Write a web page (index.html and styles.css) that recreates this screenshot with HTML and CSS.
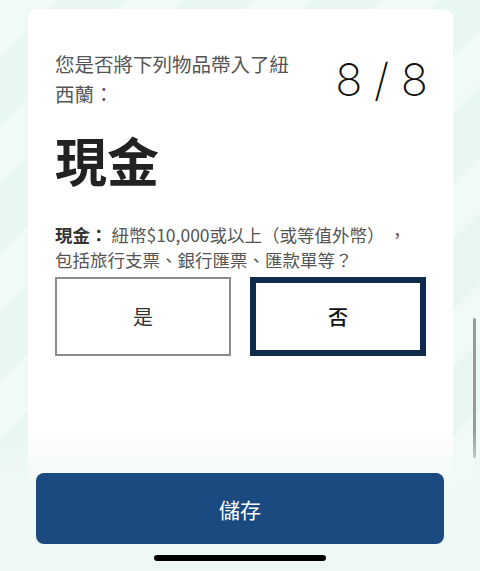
FILE: index.html
```html
<!DOCTYPE html>
<html lang="zh-Hant">
<head>
    <meta charset="UTF-8">
    <meta name="viewport" content="width=device-width, initial-scale=1.0">
    <title>現金</title>
    <link rel="stylesheet" href="styles.css">
</head>
<body>
    <div class="screen">
        <div class="card">
            <div class="card-head">
                <p class="question">您是否將下列物品帶入了紐西蘭：</p>
                <div class="counter">8 / 8</div>
            </div>

            <h1 class="item-title">現金</h1>

            <p class="item-desc"><strong>現金：</strong> 紐幣$10,000或以上（或等值外幣） ，<br>包括旅行支票、銀行匯票、匯款單等？</p>

            <div class="choices">
                <button class="choice">是</button>
                <button class="choice selected">否</button>
            </div>
        </div>

        <div class="scrollbar"></div>

        <div class="footer">
            <button class="save-button">儲存</button>
            <div class="home-bar"></div>
        </div>
    </div>
</body>
</html>
```

FILE: styles.css
```css
body {
    margin: 0;
    font-family: "Noto Sans CJK TC", "Noto Sans", sans-serif;
    color: #333;
}
.screen {
    position: relative;
    width: 480px;
    height: 571px;
    overflow: hidden;
    background-color: #e8f7f3;
    background-image: repeating-linear-gradient(135deg, rgba(255,255,255,0.35) 0 40px, rgba(255,255,255,0) 40px 90px);
}
.card {
    margin: 9px 27px 0 28px;
    height: 600px;
    padding: 40px 27px 0 27px;
    box-sizing: border-box;
    background-color: white;
    border-radius: 9px;
}
.card-head {
    display: flex;
    align-items: center;
    justify-content: space-between;
}
.question {
    margin: 0;
    width: 250px;
    font-size: 19.5px;
    line-height: 30px;
    color: #555;
}
.counter {
    font-family: "Inter", "Lato", sans-serif;
    font-weight: 200;
    font-size: 45px;
    color: #111;
    word-spacing: -1px;
    margin-right: -2px;
}
.item-title {
    margin: 21px 0 0 0;
    font-size: 52px;
    line-height: 60px;
    font-weight: 700;
    color: #222;
}
.item-desc {
    margin: 32px 0 0 0;
    font-size: 17.5px;
    line-height: 25px;
    color: #555;
}
.item-desc strong {
    color: #333;
}
.choices {
    display: grid;
    grid-template-columns: 1fr 1fr;
    gap: 19px;
    margin-top: 5px;
}
.choice {
    height: 79px;
    background: white;
    border: 2px solid #8c8c8c;
    font-family: inherit;
    font-size: 20px;
    color: #333;
    cursor: pointer;
}
.choice.selected {
    border: 6px solid #0f2b4c;
    color: #111;
    font-weight: 500;
}
.scrollbar {
    position: absolute;
    top: 318px;
    left: 473px;
    width: 3px;
    height: 140px;
    border-radius: 2px;
    background-color: #999;
}
.footer {
    position: absolute;
    left: 0;
    right: 0;
    bottom: 0;
    height: 140px;
    padding: 0 36px;
    box-sizing: border-box;
    display: flex;
    flex-direction: column;
    justify-content: flex-end;
    background: linear-gradient(to bottom, rgba(240,249,246,0) 0, rgba(240,249,246,0.9) 50px, #eef8f5 70px);
}
.save-button {
    height: 71px;
    border: none;
    border-radius: 8px;
    background-color: #1a4a80;
    color: white;
    font-family: inherit;
    font-size: 21px;
    cursor: pointer;
}
.home-bar {
    width: 172px;
    height: 6px;
    margin: 11px auto 10px auto;
    border-radius: 3px;
    background-color: #000;
}
```
